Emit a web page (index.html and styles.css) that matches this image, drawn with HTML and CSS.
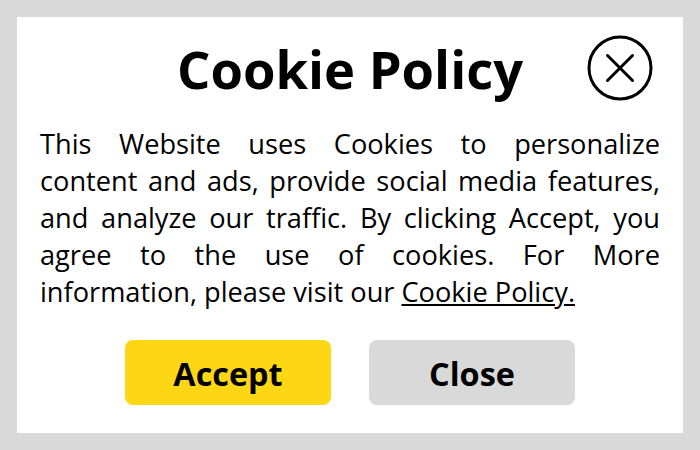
FILE: index.html
```html
<!DOCTYPE html>
<html lang="en">
<head>
    <meta charset="UTF-8" />
    <title>Cookie Policy</title>
    <link rel="stylesheet" href="styles.css">
</head>
<body>
    <div class="popup">
        <h2 class="title">Cookie Policy</h2>
        <button class="close-icon" aria-label="Close">
            <svg width="68" height="68" viewBox="0 0 68 68">
                <circle cx="34" cy="34" r="31" fill="none" stroke="#000" stroke-width="3" />
                <path d="M21.5 21.5 L46.5 46.5 M46.5 21.5 L21.5 46.5" stroke="#000" stroke-width="3" stroke-linecap="round" />
            </svg>
        </button>
        <p class="text">This Website uses Cookies to personalize content and ads, provide social media features, and analyze our traffic. By clicking Accept, you agree to the use of cookies. For More information, please visit our <a href="#">Cookie Policy.</a></p>
        <div class="buttons">
            <button class="btn accept">Accept</button>
            <button class="btn close">Close</button>
        </div>
    </div>
</body>
</html>
```

FILE: styles.css
```css
html, body {
    margin: 0;
    padding: 0;
}

body {
    font-family: "Open Sans", sans-serif;
    background-color: #d9d9d9;
    padding: 17px;
    height: 450px;
    box-sizing: border-box;
}

.popup {
    position: relative;
    background-color: #fff;
    height: 416px;
    box-sizing: border-box;
    padding: 18px 23px 0;
}

.title {
    margin: 0;
    text-align: center;
    font-size: 52.5px;
    font-weight: 700;
    line-height: 68px;
    color: #000;
}

.close-icon {
    position: absolute;
    top: 17px;
    right: 29px;
    width: 68px;
    height: 68px;
    padding: 0;
    border: none;
    background: none;
    cursor: pointer;
}

.close-icon svg {
    display: block;
}

.text {
    margin: 22px 0 0;
    font-size: 27.2px;
    line-height: 37px;
    text-align: justify;
    color: #000;
}

.text a {
    color: #000;
    text-decoration: underline;
}

.buttons {
    display: flex;
    justify-content: center;
    gap: 38px;
    margin-top: 30px;
}

.btn {
    width: 206px;
    height: 65px;
    border: none;
    border-radius: 8px;
    font-family: "Open Sans", sans-serif;
    font-size: 32.4px;
    font-weight: 700;
    color: #000;
    cursor: pointer;
}

.accept {
    background-color: #fdd713;
}

.close {
    background-color: #d9d9d9;
}
```
